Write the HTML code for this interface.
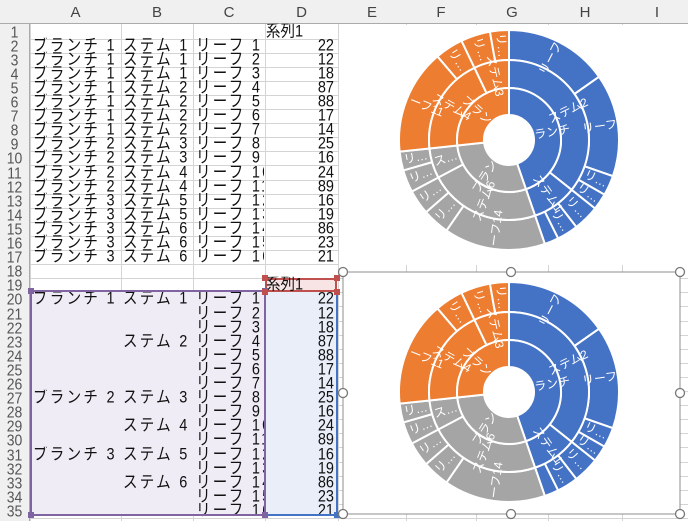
<!DOCTYPE html>
<html><head><meta charset="utf-8"><style>
*{margin:0;padding:0;box-sizing:border-box}
body{width:688px;height:521px;overflow:hidden;background:#fff;position:relative;font-family:"Liberation Sans","Noto Sans CJK JP",sans-serif}
#hdr{position:absolute;left:0;top:0;width:688px;height:24px;background:#f0f0f0;border-bottom:1px solid #ababab}
#hdr span{position:absolute;top:4px;font-size:15px;color:#444;text-align:center;font-weight:300}
#rh{position:absolute;left:0;top:24px;width:30px;height:497px;background:#f0f0f0;border-right:1px solid #ababab}
.row{position:absolute;left:0;height:14.1px;width:688px;font-size:14.5px;line-height:14px;color:#111;white-space:nowrap}
.row i{position:absolute;left:0;width:29px;text-align:center;font-style:normal;color:#555;font-size:14px;transform:scaleY(1.12)}
.row b{position:absolute;font-weight:normal;overflow:hidden;letter-spacing:2.3px;transform:scaleY(1.15);transform-origin:50% 60%}
.a{left:33px;width:87px}.b{left:123px;width:70px}.c{left:196px;width:68px}.d{left:266px;width:68px;text-align:right;letter-spacing:0!important}
.vl{position:absolute;top:24px;width:1px;height:497px;background:#d4d4d4}
.hl{position:absolute;left:30px;width:658px;height:1px;background:#d4d4d4}
</style></head><body>
<div id="grid"></div>
<div id="hdr">
<span style="left:30px;width:91px">A</span><span style="left:121px;width:72px">B</span><span style="left:193px;width:72px">C</span><span style="left:265px;width:73px">D</span><span style="left:338px;width:68px">E</span><span style="left:406px;width:70px">F</span><span style="left:476px;width:72px">G</span><span style="left:548px;width:74px">H</span><span style="left:622px;width:70px">I</span>
</div>
<div id="rh"></div>
<div style="position:absolute;left:31px;top:292px;width:234px;height:223px;background:#efecf6"></div>
<div style="position:absolute;left:265px;top:292px;width:72px;height:223px;background:#e9eef8"></div>
<div style="position:absolute;left:265px;top:278px;width:72px;height:14px;background:#f8e4e4;border:2px solid #c0504d"></div>
<div id="rows"></div>
<svg id="ch" width="688" height="521" style="position:absolute;left:0;top:0"></svg>
<script>
var g=document.getElementById('grid'),h='';
[30,121,193,265,338,406,476,548,622].forEach(function(x){h+='<div class="vl" style="left:'+x+'px"></div>'});
for(var r=0;r<35;r++)h+='<div class="hl" style="top:'+(24.5+r*14.1+14)+'px"></div>';
g.innerHTML=h;
var L=[22,12,18,87,88,17,14,25,16,24,89,16,19,86,23,21],S=[1,1,1,2,2,2,2,3,3,4,4,5,5,6,6,6],B=[1,1,1,1,1,1,1,2,2,2,2,3,3,3,3,3];
var rh='';
function row(n,a,b,c,d){rh+='<div class="row" style="top:'+(24.5+(n-1)*14.1)+'px"><i>'+n+'</i><b class="a">'+a+'</b><b class="b">'+b+'</b><b class="c">'+c+'</b><b class="d" style="'+(d=='系列1'?'text-align:left':'')+'">'+d+'</b></div>'}
row(1,'','','','系列1');
for(var i=0;i<16;i++)row(i+2,'ブランチ '+B[i],'ステム '+S[i],'リーフ '+(i+1),L[i]);
row(18,'','','','');row(19,'','','','系列1');
for(var i=0;i<16;i++)row(i+20,(i==0||B[i]!=B[i-1])?'ブランチ '+B[i]:'',(i==0||S[i]!=S[i-1])?'ステム '+S[i]:'','リーフ '+(i+1),L[i]);
document.getElementById('rows').innerHTML=rh;
var s='<rect x="339" y="25" width="349" height="240" fill="#fff"/><rect x="343" y="272" width="337" height="242" fill="#fff" stroke="#8c8c8c"/>';
s+='<rect x="31" y="291" width="234" height="224" fill="none" stroke="#8064a2" stroke-width="2"/><line x1="337" y1="292" x2="337" y2="515" stroke="#4472c4" stroke-width="2"/><line x1="265" y1="515" x2="337" y2="515" stroke="#4472c4" stroke-width="2"/>';
[[31,291],[265,291],[31,515],[265,515]].forEach(function(p){s+='<rect x="'+(p[0]-3)+'" y="'+(p[1]-3)+'" width="6" height="6" fill="#8064a2"/>'});
s+='<rect x="334" y="512" width="6" height="6" fill="#4472c4"/>';
[[265,278],[337,278],[265,292],[337,292]].forEach(function(p){s+='<rect x="'+(p[0]-3)+'" y="'+(p[1]-3)+'" width="6" height="6" fill="#c0504d"/>'});
var data=[[ '#4472c4','ブランチ1',[['ステム2',[['リーフ5',88],['リーフ4',87],['リ…',17],['リ…',14]]],['ステム1',[['リ…',22],['リ…',18],['',12]]]]],
['#a5a5a5','ブランチ3',[['ステム6',[['リーフ14',86],['リ…',23],['リ…',21]]],['ス…',[['リ…',19],['リ…',16]]]]],
['#ed7d31','ブランチ2',[['ステム4',[['リーフ11',89],['リ…',24]]],['ステム3',[['リ…',25],['リ…',16]]]]]];
function P(cx,cy,r,a){return [cx+r*Math.sin(a),cy-r*Math.cos(a)]}
function seg(cx,cy,r0,r1,a0,a1,c){var p1=P(cx,cy,r1,a0),p2=P(cx,cy,r1,a1),p3=P(cx,cy,r0,a1),p4=P(cx,cy,r0,a0),lg=(a1-a0)>Math.PI?1:0;
return '<path d="M'+p1+'A'+r1+','+r1+' 0 '+lg+' 1 '+p2+'L'+p3+'A'+r0+','+r0+' 0 '+lg+' 0 '+p4+'Z" fill="'+c+'" stroke="#fff" stroke-width="2"/>'}
function lab(cx,cy,r,a,t){if(!t)return '';var p=P(cx,cy,r,a),d=a*180/Math.PI;var rot=d-90;if(d>180)rot=d+90;return '<text x="'+p[0]+'" y="'+p[1]+'" transform="rotate('+rot+' '+p[0]+' '+p[1]+')" fill="#fff" font-size="12" text-anchor="middle" dominant-baseline="middle">'+t+'</text>'}
function chart(cx,cy){var T=577,a=0,o='',t='';
data.forEach(function(b){var bs=0;b[2].forEach(function(st){st[1].forEach(function(l){bs+=l[1]})});var ba=a;
b[2].forEach(function(st){var ss=0;st[1].forEach(function(l){ss+=l[1]});var sa=a;
st[1].forEach(function(l){var la=a;a+=l[1]/T*2*Math.PI;o+=seg(cx,cy,80,110,la,a,b[0]);t+=lab(cx,cy,95,(la+a)/2,l[0])});
o+=seg(cx,cy,52,80,sa,a,b[0]);t+=lab(cx,cy,66,(sa+a)/2,st[0])});
o+=seg(cx,cy,25,52,ba,a,b[0]);t+=lab(cx,cy,38,(ba+a)/2,b[1].slice(0,4))});
return o+t}
s+=chart(509,140)+chart(509,392);
[[343,272],[511,272],[680,272],[343,393],[680,393],[343,514],[511,514],[680,514]].forEach(function(p){s+='<circle cx="'+p[0]+'" cy="'+p[1]+'" r="4.5" fill="#fff" stroke="#777" stroke-width="1.3"/>'});
document.getElementById('ch').innerHTML=s;
</script>
</body></html>
